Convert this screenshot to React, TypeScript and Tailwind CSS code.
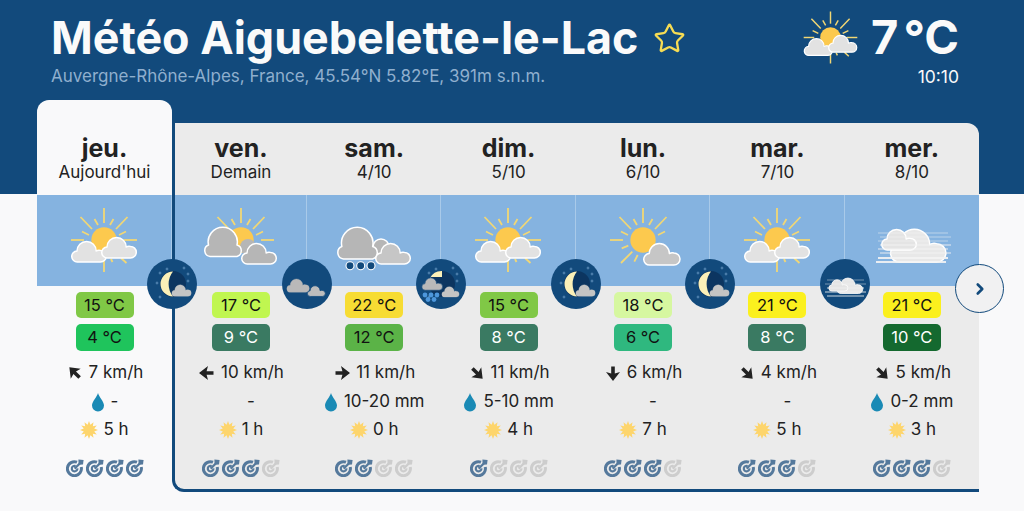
import React from 'react';
import { Star, ChevronRight } from 'lucide-react';

type Sky = 'sunCloud' | 'cloudySun' | 'rainCloud' | 'sun' | 'fog';
type Night = 'moon' | 'cloud' | 'snowMoon' | 'fog';

interface Day {
  name: string;
  sub: string;
  sky: Sky;
  night: Night;
  high: string;
  highBg: string;
  highText?: string;
  low: string;
  lowBg: string;
  lowText?: string;
  windDeg: number;
  wind: string;
  rain: string;
  drop: boolean;
  sunH: string;
  score: number;
}

const days: Day[] = [
  { name: 'jeu.', sub: "Aujourd'hui", sky: 'sunCloud', night: 'moon', high: '15 °C', highBg: 'bg-[#80c846]', low: '4 °C', lowBg: 'bg-[#1fc45c]', windDeg: -45, wind: '7 km/h', rain: '-', drop: true, sunH: '5 h', score: 4 },
  { name: 'ven.', sub: 'Demain', sky: 'cloudySun', night: 'cloud', high: '17 °C', highBg: 'bg-[#c0f650]', low: '9 °C', lowBg: 'bg-[#3a7a62]', lowText: 'text-white', windDeg: -90, wind: '10 km/h', rain: '-', drop: false, sunH: '1 h', score: 3 },
  { name: 'sam.', sub: '4/10', sky: 'rainCloud', night: 'snowMoon', high: '22 °C', highBg: 'bg-[#f7dc33]', low: '12 °C', lowBg: 'bg-[#5bb347]', windDeg: 90, wind: '11 km/h', rain: '10-20 mm', drop: true, sunH: '0 h', score: 2 },
  { name: 'dim.', sub: '5/10', sky: 'sunCloud', night: 'moon', high: '15 °C', highBg: 'bg-[#80c846]', low: '8 °C', lowBg: 'bg-[#3a7a62]', lowText: 'text-white', windDeg: 135, wind: '11 km/h', rain: '5-10 mm', drop: true, sunH: '4 h', score: 1 },
  { name: 'lun.', sub: '6/10', sky: 'sun', night: 'moon', high: '18 °C', highBg: 'bg-[#d6f7a0]', low: '6 °C', lowBg: 'bg-[#2fb87f]', windDeg: 180, wind: '6 km/h', rain: '-', drop: false, sunH: '7 h', score: 3 },
  { name: 'mar.', sub: '7/10', sky: 'sunCloud', night: 'fog', high: '21 °C', highBg: 'bg-[#fbf01e]', low: '8 °C', lowBg: 'bg-[#3a7a62]', lowText: 'text-white', windDeg: 135, wind: '4 km/h', rain: '-', drop: false, sunH: '5 h', score: 3 },
  { name: 'mer.', sub: '8/10', sky: 'fog', night: 'moon', high: '21 °C', highBg: 'bg-[#fbf01e]', low: '10 °C', lowBg: 'bg-[#14692f]', lowText: 'text-white', windDeg: 135, wind: '5 km/h', rain: '0-2 mm', drop: true, sunH: '3 h', score: 3 },
];

const CLOUD = 'M5.5 22H28.5A5.8 5.8 0 0 0 28.5 10.4A5 5 0 0 0 24.2 11A9.4 9.4 0 0 0 5 11A5.5 5.5 0 0 0 5.5 22Z';
const BIG_CLOUD = 'M6 32H33A6 6 0 0 0 33 20.5A14.6 14.6 0 1 0 4.5 20.5A6 6 0 0 0 6 32Z';

const Cloud = ({ x, y, s = 1, fill = '#e2e2e2', stroke = '#fff', sw = 1.5, big = false }: { x: number; y: number; s?: number; fill?: string; stroke?: string; sw?: number; big?: boolean }) => (
  <path d={big ? BIG_CLOUD : CLOUD} transform={`translate(${x} ${y}) scale(${s})`} fill={fill} stroke={stroke} strokeWidth={sw / s} strokeLinejoin="round" />
);

const UPPER_RAYS = [
  [0, -32, 0, -17], [-33, 0, -20, 0],
  [-23.5, -23, -12, -11], [23.5, -23, 12, -11], [-9.5, -21, -6, -15], [9.5, -21, 6, -15],
  [-22, -8.5, -15, -5], [22, -8.5, 15, -5],
];
const LOWER_RAYS = [[0, 20, 0, 32], [20, 0, 33, 0], [17, 18, 22.5, 23], [7, 19, 8.5, 22]];
const RIGHT_RAY = [[20, 0, 33, 0]];
const CLEAR_RAYS = [[-22, 23, -10.7, 11.7], [-21.3, 8.3, -14.7, 5.7], [-8.7, 21.7, -5.3, 15]];

const Sun = ({ extra = LOWER_RAYS }: { extra?: number[][] }) => (
  <g transform="translate(40 40)">
    {UPPER_RAYS.concat(extra).map((r, i) => (
      <line key={i} x1={r[0]} y1={r[1]} x2={r[2]} y2={r[3]} stroke="#f2d774" strokeWidth="1.8" />
    ))}
    <circle r="12.7" fill="#fcc94e" />
  </g>
);

const SkyIcon = ({ kind, size = 80 }: { kind: Sky; size?: number }) => (
  <svg width={size} height={size} viewBox="0 0 80 80" className="block shrink-0">
    {kind === 'sunCloud' && (
      <>
        <Sun />
        <Cloud x={8} y={40} />
        <Cloud x={38} y={36} />
      </>
    )}
    {kind === 'cloudySun' && (
      <>
        <Sun extra={RIGHT_RAY} />
        <circle cx="47" cy="47" r="8" fill="#b6b6b6" />
        <Cloud x={3} y={24.5} fill="#b6b6b6" big />
        <Cloud x={41} y={42} fill="#b6b6b6" />
      </>
    )}
    {kind === 'sun' && (
      <>
        <Sun extra={CLEAR_RAYS} />
        <Cloud x={41} y={42} s={1.05} fill="#c6c6c6" />
      </>
    )}
    {kind === 'rainCloud' && (
      <>
        <circle cx="47" cy="47" r="8" fill="#b6b6b6" stroke="#fff" strokeWidth="1.5" />
        <Cloud x={3} y={24.4} s={1.08} fill="#b6b6b6" big />
        <Cloud x={42} y={42} fill="#c6c6c6" />
        {[16, 26.7, 37].map((c) => (
          <circle key={c} cx={c} cy={65.7} r="4" fill="#124a7c" stroke="#fff" strokeWidth="1.1" />
        ))}
      </>
    )}
    {kind === 'fog' && (
      <>
        <Cloud x={19} y={27} s={1.6} fill="#e8e8e8" />
        <Cloud x={10} y={28} fill="#e4e4e4" />
        {[33, 37, 41, 45, 49, 53, 58, 62].map((y, i) => (
          <line key={y} x1={i === 7 ? 4 : i % 2 ? 8 : 6} y1={y} x2={i === 7 ? 74 : i % 2 ? 79 : 76} y2={y} stroke="#f4f4f4" strokeWidth={i > 5 ? 1.8 : 1.2} opacity={i < 3 ? 0.5 : 0.9} />
        ))}
      </>
    )}
  </svg>
);

const NightBadge = ({ kind }: { kind: Night }) => {
  const stars = [[10, 24], [13, 38], [20, 10], [37, 9], [41, 15], [41, 22], [13, 14]];
  return (
    <svg width="50" height="50" viewBox="0 0 50 50" className="block">
      <circle cx="25" cy="25" r="25" fill="#124a7c" />
      {kind !== 'cloud' && kind !== 'fog' &&
        stars.map((p, i) => (
          <path key={i} d={`M${p[0]} ${p[1] - 2}L${p[0] + 0.6} ${p[1] - 0.6}L${p[0] + 2} ${p[1]}L${p[0] + 0.6} ${p[1] + 0.6}L${p[0]} ${p[1] + 2}L${p[0] - 0.6} ${p[1] + 0.6}L${p[0] - 2} ${p[1]}L${p[0] - 0.6} ${p[1] - 0.6}Z`} fill="#5f8fbb" />
        ))}
      {kind === 'moon' && (
        <>
          <circle cx="26" cy="25" r="13" fill="#0c3560" />
          <path d="M26 12.5A12.5 12.5 0 0 0 26 37.5A20 20 0 0 1 26 12.5Z" fill="#fbf0b8" />
          <Cloud x={25} y={25} s={0.56} fill="#c4c4c4" stroke="#c4c4c4" sw={0.3} />
        </>
      )}
      {kind === 'cloud' && (
        <>
          <Cloud x={5} y={19} s={0.65} fill="#b9b9b9" stroke="#b9b9b9" sw={0.3} />
          <Cloud x={25.5} y={26} s={0.52} fill="#bdbdbd" stroke="#124a7c" sw={0.8} />
        </>
      )}
      {kind === 'snowMoon' && (
        <>
          <circle cx="26" cy="25" r="13" fill="#0c3560" />
          <path d="M14 19A13 13 0 0 1 26 12V18H14Z" fill="#fbf0b8" />
          <Cloud x={6} y={18} s={0.6} fill="#b9b9b9" stroke="#124a7c" sw={0.6} />
          <Cloud x={26} y={27} s={0.5} fill="#c4c4c4" stroke="#c4c4c4" sw={0.3} />
          {[[9, 36], [15, 36], [21, 36], [12, 40.5], [18, 40.5]].map((p, i) => (
            <circle key={i} cx={p[0]} cy={p[1]} r="2.4" fill="#4d97dc" />
          ))}
        </>
      )}
      {kind === 'fog' && (
        <>
          <Cloud x={17} y={18} s={0.75} fill="#e8e8e8" sw={0.8} />
          <Cloud x={9} y={20} s={0.55} fill="#e4e4e4" sw={0.8} />
          {[21, 25, 29, 33, 37].map((y, i) => (
            <line key={y} x1={i % 2 ? 5 : 7} y1={y} x2={i % 2 ? 46 : 44} y2={y} stroke="#f2f2f2" strokeWidth="0.9" opacity={i < 2 ? 0.5 : 0.95} />
          ))}
        </>
      )}
    </svg>
  );
};

const WindArrow = ({ deg }: { deg: number }) => (
  <svg width="18" height="18" viewBox="0 0 18 18" style={{ transform: `rotate(${deg}deg)` }}>
    <path d="M9 1L16 10L10.8 8.6V15.5H7.2V8.6L2 10Z" fill="#222" />
  </svg>
);

const Drop = () => (
  <svg width="14" height="20" viewBox="0 0 14 20">
    <path d="M7 1C6 5 1 9.5 1 13.5A6 6 0 0 0 13 13.5C13 9.5 8 5 7 1Z" fill="#1a8ab5" />
  </svg>
);

const SunGlyph = () => {
  const spikes = Array.from({ length: 24 }, (_, i) => {
    const a = (i * Math.PI) / 12;
    const r = i % 2 ? 5.4 : 9;
    return `${9 + r * Math.sin(a)},${9 - r * Math.cos(a)}`;
  }).join(' ');
  return (
    <svg width="18" height="18" viewBox="0 0 18 18">
      <polygon points={spikes} fill="#fdd56c" />
    </svg>
  );
};

const Target = ({ on }: { on: boolean }) => {
  const c = on ? '#55799c' : '#cdcdcd';
  return (
    <svg width="18" height="18" viewBox="0 0 18 18">
      <path d="M11 3.2A7 7 0 1 0 15.2 8" fill="none" stroke={c} strokeWidth="3" />
      <path d="M9.6 7A2.8 2.8 0 1 0 11.4 9.4" fill="none" stroke={c} strokeWidth="2.2" />
      <path d="M8.6 9.6L14 4.2" stroke={c} strokeWidth="2.2" />
      <path d="M12.4 0.6L17.6 1L17 5.6L12.6 5.8Z" fill={c} />
    </svg>
  );
};

const DayColumn = ({ day, index }: { day: Day; index: number }) => {
  const isToday = index === 0;
  const last = index === days.length - 1;
  return (
    <div className={index === 1 ? 'flex w-[132px] flex-col items-center' : isToday ? 'flex w-full flex-col items-center' : 'flex flex-1 flex-col items-center'}>
      <div className="flex h-[72px] w-full flex-col items-center justify-end pb-[12px]">
        <div className="text-[25px] leading-[26px] font-bold text-[#222]">{day.name}</div>
        <div className="text-[17px] leading-[22px] text-[#222]">{day.sub}</div>
      </div>
      <div className={last ? 'relative flex h-[91px] w-full justify-center bg-[#85b3e0] pt-[5px]' : 'relative flex h-[91px] w-full justify-center border-r border-r-white/30 bg-[#85b3e0] pt-[5px]'}>
        <SkyIcon kind={day.sky} />
        {!last && (
          <div className="absolute right-[-26px] bottom-[-23px] z-10">
            <NightBadge kind={day.night} />
          </div>
        )}
      </div>
      <div className={`mt-[6px] flex h-[26px] w-[58px] items-center justify-center rounded-[5px] text-[16.5px] text-[#111] ${day.highBg} ${day.highText ?? ''}`}>{day.high}</div>
      <div className={`mt-[6px] flex h-[27px] w-[58px] items-center justify-center rounded-[5px] text-[16.5px] text-[#111] ${day.lowBg} ${day.lowText ?? ''}`}>{day.low}</div>
      <div className="mt-[8px] flex h-[28px] items-center gap-[5px] text-[17px] text-[#222]">
        <WindArrow deg={day.windDeg} />
        {day.wind}
      </div>
      <div className="flex h-[29px] items-center gap-[6px] text-[17px] text-[#222]">
        {day.drop ? <Drop /> : <span className="w-[14px]" />}
        {day.rain}
      </div>
      <div className="flex h-[28px] items-center gap-[5px] text-[17px] text-[#222]">
        <SunGlyph />
        {day.sunH}
      </div>
      <div className="mt-[15px] flex gap-[2px]">
        {[0, 1, 2, 3].map((i) => (
          <Target key={i} on={i < day.score} />
        ))}
      </div>
    </div>
  );
};

export default function App() {
  return (
    <div className="relative h-[511px] w-[1024px] overflow-hidden bg-[#f9f9fa] font-['Inter',sans-serif]">
      <header className="flex h-[194px] items-start justify-between bg-[#124a7c] pr-[65px] pl-[51px]">
        <div>
          <div className="flex items-center gap-[15px] pt-[14px]">
            <h1 className="text-[44.8px] leading-[48px] font-bold text-[#fafafa]">Météo Aiguebelette-le-Lac</h1>
            <Star size={33} strokeWidth={1.7} className="text-[#f6dc54]" />
          </div>
          <p className="mt-[3px] text-[17px] leading-[22px] text-[#8fafce]">Auvergne-Rhône-Alpes, France, 45.54°N 5.82°E, 391m s.n.m.</p>
        </div>
        <div className="flex flex-col items-end pt-[8px]">
          <div className="flex h-[58px] items-center gap-[8px]">
            <SkyIcon kind="sunCloud" size={65} />
            <span className="text-[47px] leading-[58px] font-bold text-[#fafafa] [word-spacing:-6px]">7 °C</span>
          </div>
          <span className="text-[17.5px] leading-[22px] text-[#fafafa]">10:10</span>
        </div>
      </header>

      <div className="mt-[-94px] ml-[37px] flex w-[942px] items-start">
        <div className="w-[135px] rounded-t-xl bg-[#f9f9fa] pt-[23px]">
          <DayColumn day={days[0]} index={0} />
        </div>
        <div className="mt-[23px] flex h-[369px] w-[807px] rounded-tr-xl rounded-bl-xl border-b-[3px] border-l-[3px] border-[#124a7c] bg-[#ebebeb]">
          {days.slice(1).map((d, i) => (
            <DayColumn key={d.name} day={d} index={i + 1} />
          ))}
        </div>
      </div>

      <button className="absolute top-[264px] left-[955px] z-20 flex h-[49px] w-[49px] items-center justify-center rounded-full border-[1.5px] border-[#124a7c] bg-[#f1f1f2] text-[#124a7c]">
        <ChevronRight size={18} strokeWidth={3.5} />
      </button>
    </div>
  );
}
